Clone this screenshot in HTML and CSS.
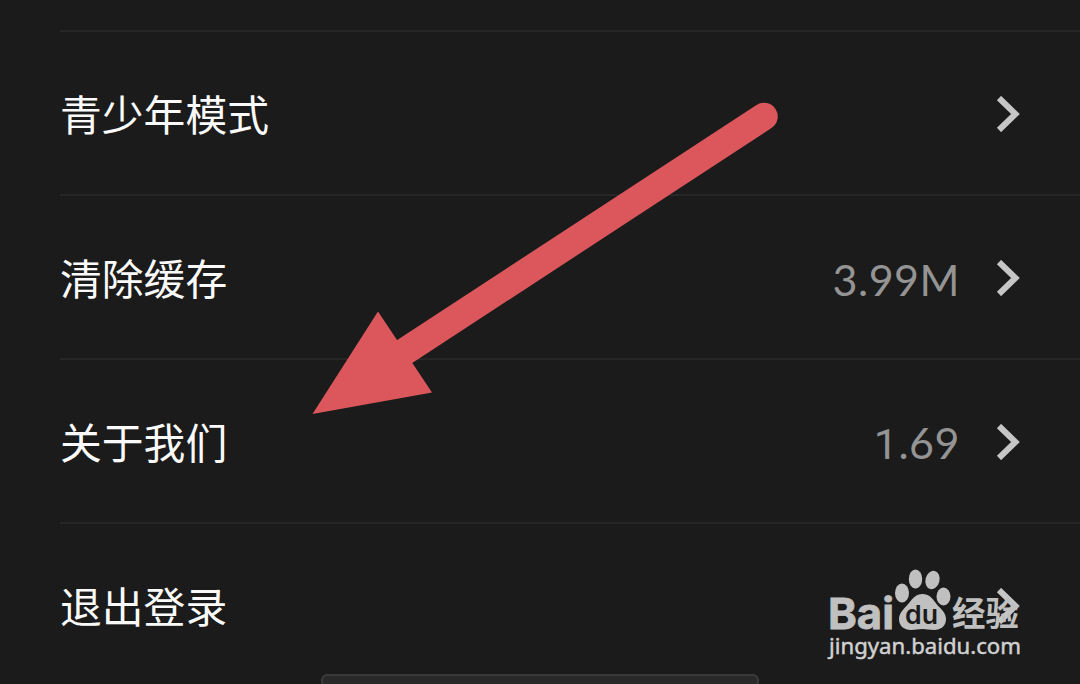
FILE: index.html
```html
<!DOCTYPE html>
<html lang="zh-CN">
<head>
  <meta charset="UTF-8">
  <meta name="viewport" content="width=device-width, initial-scale=1.0">
  <title>设置</title>
  <link rel="stylesheet" href="styles.css">
</head>
<body>

<div class="settings">
  <div class="row">
    <span class="label">青少年模式</span>
    <svg class="chevron" viewBox="0 0 24 36"><path d="M3 2 L19.500 18 L3 34"/></svg>
  </div>
  <div class="row">
    <span class="label">清除缓存</span>
    <span class="value">3.99M</span>
    <svg class="chevron" viewBox="0 0 24 36"><path d="M3 2 L19.500 18 L3 34"/></svg>
  </div>
  <div class="row">
    <span class="label">关于我们</span>
    <span class="value"><span class="one">1</span>.69</span>
    <svg class="chevron" viewBox="0 0 24 36"><path d="M3 2 L19.500 18 L3 34"/></svg>
  </div>
  <div class="row">
    <span class="label">退出登录</span>
    <svg class="chevron" viewBox="0 0 24 36"><path d="M3 2 L19.500 18 L3 34"/></svg>
  </div>
</div>

<!-- Pointer arrow -->
<svg class="arrow" viewBox="0 0 480 330">
  <path class="shaft" d="M94 260 L454 24.500"/>
  <path class="head" d="M2.500 322 L68 219.500 L122 300.500 Z"/>
</svg>

<!-- Home bar -->
<div class="home-bar"></div>

<!-- Watermark -->
<svg class="watermark" viewBox="0 0 220 110">
  <text class="brand" x="8" y="68.500" textLength="66" lengthAdjust="spacingAndGlyphs">Bai</text>
  <ellipse cx="82" cy="33" rx="7" ry="9.500"/>
  <ellipse cx="95.500" cy="19" rx="6.700" ry="9.500"/>
  <ellipse cx="112.500" cy="20" rx="7" ry="9.300" transform="rotate(14 112.500 20)"/>
  <ellipse cx="123.500" cy="36.500" rx="7" ry="9"/>
  <path d="M102.500 34 C109 34 112 38 115 42 C118 47 126 51 126 59 C126 66 121 70 114 70 C109 70 107 69 102.500 69 C98 69 96 70 91 70 C84 70 79 66 79 59 C79 52 86 47 89 43 C93 38 96 34 102.500 34 Z"/>
  <text class="du" x="85" y="64" textLength="33" lengthAdjust="spacingAndGlyphs">du</text>
  <text class="jy" x="132" y="66" textLength="67" lengthAdjust="spacingAndGlyphs">经验</text>
  <text class="url" x="9" y="94" textLength="192" lengthAdjust="spacingAndGlyphs">jingyan.baidu.com</text>
</svg>

</body>
</html>
```

FILE: styles.css
```css
body {
  margin: 0;
  width: 1080px;
  height: 684px;
  position: relative;
  overflow: hidden;
  background: #1b1b1b;
  font-family: "Noto Sans CJK SC", sans-serif;
}
.settings {
  padding: 30px 0 0 60px;
}
.row {
  display: flex;
  align-items: center;
  height: 164px;
  padding-right: 60px;
  box-sizing: border-box;
  border-top: 2px solid #262626;
}
.label {
  flex: 1;
  color: #fafafa;
  font-size: 41.800px;
  line-height: 60px;
}
.value {
  margin-right: 36px;
  padding-top: 5px;
  color: #949494;
  font-family: Lato, sans-serif;
  font-size: 43px;
  line-height: 60px;
  letter-spacing: 0.500px;
}
.one {
  font-family: Roboto, sans-serif;
}
.chevron {
  width: 24px;
  height: 36px;
  padding-top: 2px;
}
.chevron path {
  fill: none;
  stroke: #c6c6c6;
  stroke-width: 6;
}
.arrow {
  position: absolute;
  left: 310px;
  top: 92px;
  width: 480px;
  height: 330px;
}
.shaft {
  fill: none;
  stroke: #dc575c;
  stroke-width: 27.500;
  stroke-linecap: round;
}
.head {
  fill: #dc575c;
}
.home-bar {
  position: absolute;
  left: 321px;
  top: 674px;
  width: 438px;
  height: 13px;
  box-sizing: border-box;
  border: 2px solid #3a3a3a;
  border-radius: 6px;
  background: #292929;
}
.watermark {
  position: absolute;
  left: 820px;
  top: 560px;
  width: 220px;
  height: 110px;
  fill: #c0c0c0;
}
.brand {
  font: 700 43px Inter, sans-serif;
  stroke: #c0c0c0;
  stroke-width: 0.800;
}
.du {
  font: 600 26px Inter, sans-serif;
  fill: #1b1b1b;
}
.jy {
  font: 700 34px "Noto Sans CJK SC", sans-serif;
}
.url {
  font: 400 22.500px "Noto Sans", sans-serif;
  fill: #d0d0d0;
  stroke: #d0d0d0;
  stroke-width: 0.500;
}
```
